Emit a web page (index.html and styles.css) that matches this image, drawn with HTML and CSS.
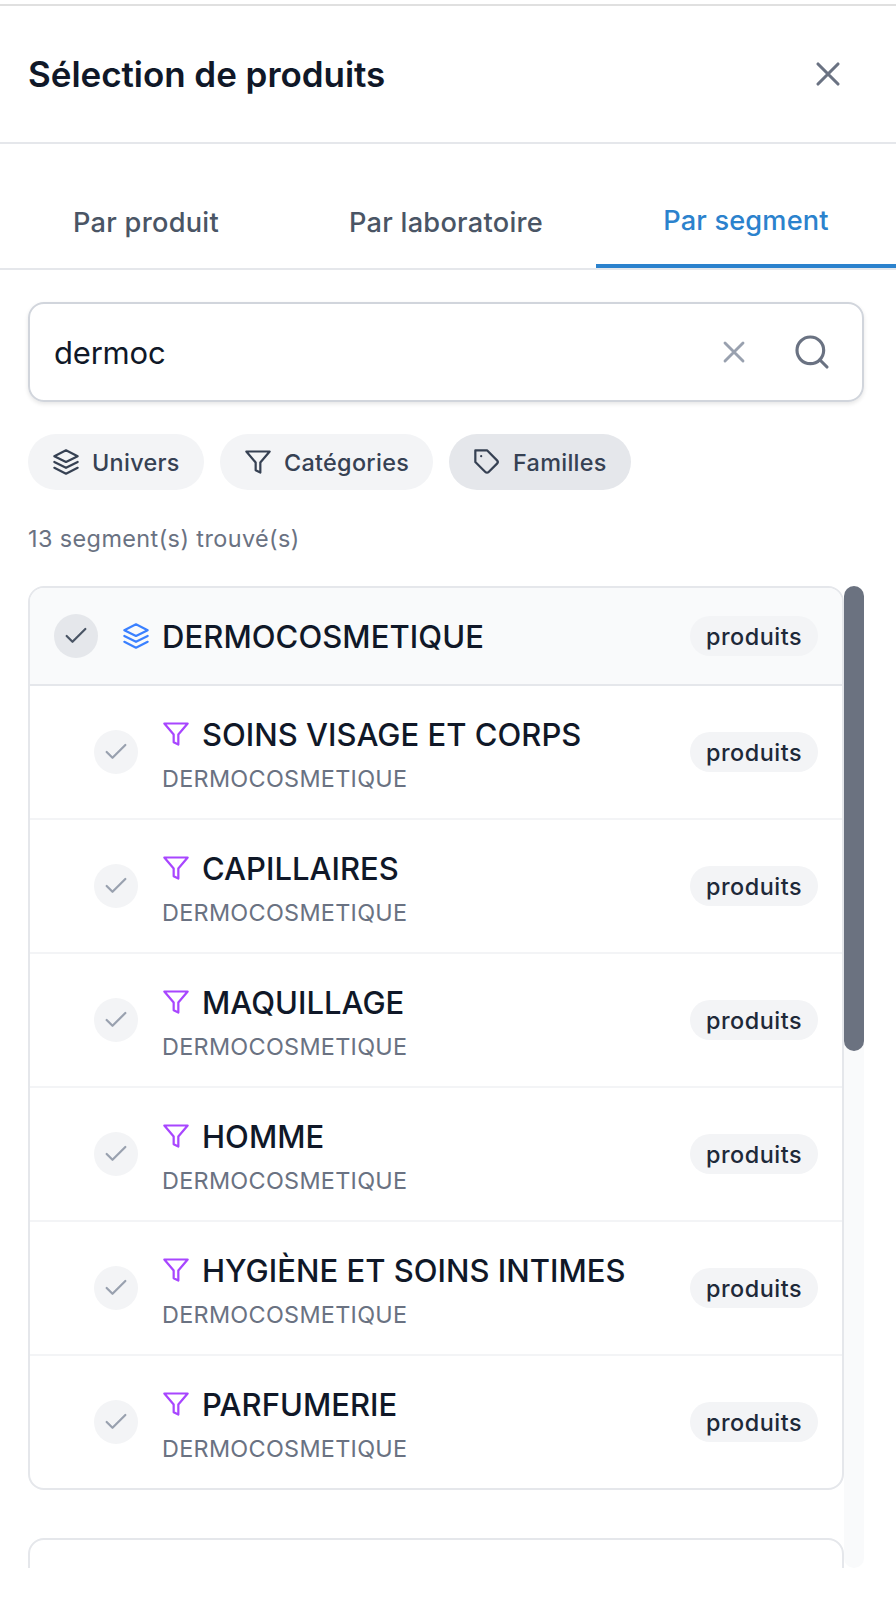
FILE: index.html
```
<!DOCTYPE html>
<html lang="fr">
<head>
<meta charset="utf-8">
<title>Sélection de produits</title>
<link rel="stylesheet" href="styles.css">
</head>
<body>
<svg class="sprite" aria-hidden="true">
  <symbol id="i-x" viewBox="0 0 24 24"><path d="M18 6 6 18M6 6l12 12"/></symbol>
  <symbol id="i-search" viewBox="0 0 24 24"><circle cx="11" cy="11" r="8"/><path d="m21 21-4.35-4.35"/></symbol>
  <symbol id="i-layers" viewBox="0 0 24 24"><path d="M12 2 2 7l10 5 10-5zM2 17l10 5 10-5M2 12l10 5 10-5"/></symbol>
  <symbol id="i-filter" viewBox="0 0 24 24"><path d="M22 3H2l8 9.46V19l4 2v-8.54z"/></symbol>
  <symbol id="i-tag" viewBox="0 0 24 24"><path d="m20.59 13.41-7.17 7.17a2 2 0 0 1-2.83 0L2 12V2h10l8.59 8.59a2 2 0 0 1 0 2.82zM7 7h.01"/></symbol>
  <symbol id="i-check" viewBox="0 0 24 24"><path d="M20 6 9 17l-5-5"/></symbol>
</svg>
<div class="panel">
  <header class="header">
    <h1 class="title">Sélection de produits</h1>
    <button class="close" aria-label="Fermer"><svg class="icon icon-lg"><use href="#i-x"/></svg></button>
  </header>
  <nav class="tabs">
    <button class="tab">Par produit</button>
    <button class="tab">Par laboratoire</button>
    <button class="tab active">Par segment</button>
  </nav>
  <main class="content">
    <div class="search">
      <span class="query">dermoc</span>
      <svg class="icon icon-clear"><use href="#i-x"/></svg>
      <svg class="icon icon-lg"><use href="#i-search"/></svg>
    </div>
    <div class="chips">
      <button class="chip univers"><svg class="icon"><use href="#i-layers"/></svg>Univers</button>
      <button class="chip categories"><svg class="icon"><use href="#i-filter"/></svg>Catégories</button>
      <button class="chip familles selected"><svg class="icon"><use href="#i-tag"/></svg>Familles</button>
    </div>
    <p class="count">13 segment(s) trouvé(s)</p>
    <div class="scroller">
      <div class="list">
        <section class="card">
          <div class="group">
            <span class="check"><svg class="icon"><use href="#i-check"/></svg></span>
            <div class="name"><svg class="icon blue"><use href="#i-layers"/></svg><span class="label">DERMOCOSMETIQUE</span></div>
            <span class="badge">produits</span>
          </div>
          <div class="row">
            <span class="check"><svg class="icon"><use href="#i-check"/></svg></span>
            <div class="info"><div class="name"><svg class="icon purple"><use href="#i-filter"/></svg><span class="label">SOINS VISAGE ET CORPS</span></div><div class="parent">DERMOCOSMETIQUE</div></div>
            <span class="badge">produits</span>
          </div>
          <div class="row">
            <span class="check"><svg class="icon"><use href="#i-check"/></svg></span>
            <div class="info"><div class="name"><svg class="icon purple"><use href="#i-filter"/></svg><span class="label">CAPILLAIRES</span></div><div class="parent">DERMOCOSMETIQUE</div></div>
            <span class="badge">produits</span>
          </div>
          <div class="row">
            <span class="check"><svg class="icon"><use href="#i-check"/></svg></span>
            <div class="info"><div class="name"><svg class="icon purple"><use href="#i-filter"/></svg><span class="label">MAQUILLAGE</span></div><div class="parent">DERMOCOSMETIQUE</div></div>
            <span class="badge">produits</span>
          </div>
          <div class="row">
            <span class="check"><svg class="icon"><use href="#i-check"/></svg></span>
            <div class="info"><div class="name"><svg class="icon purple"><use href="#i-filter"/></svg><span class="label">HOMME</span></div><div class="parent">DERMOCOSMETIQUE</div></div>
            <span class="badge">produits</span>
          </div>
          <div class="row">
            <span class="check"><svg class="icon"><use href="#i-check"/></svg></span>
            <div class="info"><div class="name"><svg class="icon purple"><use href="#i-filter"/></svg><span class="label">HYGIÈNE ET SOINS INTIMES</span></div><div class="parent">DERMOCOSMETIQUE</div></div>
            <span class="badge">produits</span>
          </div>
          <div class="row">
            <span class="check"><svg class="icon"><use href="#i-check"/></svg></span>
            <div class="info"><div class="name"><svg class="icon purple"><use href="#i-filter"/></svg><span class="label">PARFUMERIE</span></div><div class="parent">DERMOCOSMETIQUE</div></div>
            <span class="badge">produits</span>
          </div>
        </section>
        <section class="card next"></section>
      </div>
      <div class="track"><div class="thumb"></div></div>
    </div>
  </main>
</div>
</body>
</html>
```
FILE: styles.css
```
* { box-sizing: border-box; }
body { margin: 0; background: #fff; font-family: Inter, sans-serif; color: #101828; overflow: hidden; }
button { margin: 0; padding: 0; border: 0; background: none; font: inherit; color: inherit; }
.sprite { display: none; }
.icon { width: 28px; height: 28px; flex: none; fill: none; stroke: currentColor; stroke-width: 1.9; stroke-linecap: round; stroke-linejoin: round; }
.icon-lg { width: 40px; height: 40px; }

.panel { height: 1600px; padding-top: 4px; display: flex; flex-direction: column; }
.header { height: 140px; flex: none; padding: 0 48px 0 28px; display: flex; align-items: center; justify-content: space-between; border-top: 2px solid #e0e0e0; border-bottom: 2px solid #e5e7eb; }
.title { margin: 0; font-size: 35px; font-weight: 600; letter-spacing: -0.04px; }
.close { display: flex; color: #6a7282; }

.tabs { height: 126px; flex: none; margin-left: -4px; padding-top: 32px; display: grid; grid-template-columns: repeat(3, 1fr); border-bottom: 2px solid #e5e7eb; }
.tab { font-size: 27.2px; font-weight: 500; letter-spacing: 0.27px; color: #4a5565; }
.tab.active { color: #2b82cd; border-bottom: 4px solid #2b82cd; letter-spacing: 0.16px; }

.content { flex: 1; min-height: 0; padding: 32px 32px 32px 28px; display: flex; flex-direction: column; }
.search { height: 100px; flex: none; padding: 0 30px 0 24px; display: flex; align-items: center; border: 2px solid #d1d5dc; border-radius: 16px; box-shadow: 0 2px 4px rgba(0, 0, 0, .1); color: #6a7282; }
.query { flex: 1; font-size: 31px; letter-spacing: -0.2px; color: #101828; }
.icon-clear { width: 36px; height: 36px; margin-right: 40px; color: #99a1af; }

.chips { margin-top: 32px; display: flex; gap: 16px; }
.chip { height: 56px; padding-left: 24px; display: flex; align-items: center; gap: 12px; border-radius: 28px; background: #f3f4f6; color: #364153; font-size: 23.4px; font-weight: 500; letter-spacing: 0.3px; }
.univers { width: 176px; }
.categories { width: 213px; }
.familles { width: 182px; }
.selected { background: #e5e7eb; }
.count { margin: 32px 0; padding-top: 1px; height: 32px; font-size: 23.4px; line-height: 32px; letter-spacing: 0.42px; color: #6a7282; }

.scroller { flex: 1; min-height: 0; display: flex; overflow: hidden; }
.list { flex: 1; overflow: hidden; }
.card { border: 2px solid #e5e7eb; border-radius: 16px; overflow: hidden; }
.next { height: 200px; margin-top: 48px; }
.group, .row { padding: 24px; display: flex; align-items: center; gap: 24px; }
.group { background: #f9fafb; border-bottom: 2px solid #e5e7eb; }
.row { padding-left: 64px; border-bottom: 2px solid #f3f4f6; }
.row:last-child { border-bottom: 0; }
.check { width: 44px; height: 44px; flex: none; display: grid; place-items: center; border-radius: 50%; background: #f3f4f6; color: #99a1af; }
.group .check { background: #e5e7eb; color: #4a5565; }
.name { flex: 1; height: 48px; display: flex; align-items: center; gap: 12px; font-size: 31px; font-weight: 500; letter-spacing: 0.02px; }
.group .name { letter-spacing: 0.08px; }
.label { line-height: 46px; padding-top: 2px; }
.info { flex: 1; }
.parent { margin-top: 4px; height: 32px; padding-top: 1px; font-size: 23.4px; line-height: 32px; letter-spacing: 0.3px; color: #6a7282; }
.badge { width: 128px; height: 40px; flex: none; display: grid; place-items: center; border-radius: 20px; background: #f3f4f6; color: #1e2939; font-size: 23.4px; font-weight: 500; letter-spacing: 0.5px; }
.blue { color: #3b80ff; }
.purple { color: #a846ff; }
.track { width: 20px; flex: none; border-radius: 10px; background: #f9fafb; }
.thumb { height: 465px; border-radius: 10px; background: #6b7280; }
```
